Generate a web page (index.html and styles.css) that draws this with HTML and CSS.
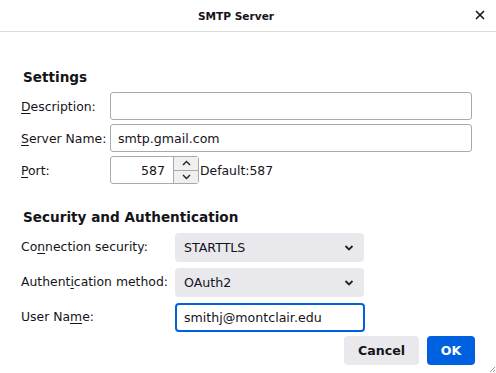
FILE: index.html
```html
<!DOCTYPE html>
<html lang="en">
<head>
    <meta charset="UTF-8">
    <title>SMTP Server</title>
    <link rel="stylesheet" href="styles.css">
</head>
<body>
    <div class="dialog">
        <div class="titlebar">
            <span class="title">SMTP Server</span>
            <svg class="close" width="10" height="10" viewBox="0 0 10 10">
                <path d="M1 1 L9 9 M9 1 L1 9" stroke="#15141a" stroke-width="1.6"/>
            </svg>
        </div>

        <div class="content">
            <h2 class="heading">Settings</h2>
            <div class="row settings-row">
                <label class="label short"><u>D</u>escription:</label>
                <input type="text" class="field wide">
            </div>
            <div class="row settings-row">
                <label class="label short"><u>S</u>erver Name:</label>
                <input type="text" class="field wide" value="smtp.gmail.com">
            </div>
            <div class="row settings-row">
                <label class="label short"><u>P</u>ort:</label>
                <div class="port">
                    <span class="port-value">587</span>
                    <div class="spin">
                        <span class="spin-btn up"><svg width="9" height="6" viewBox="0 0 9 6"><path d="M1 5 L4.5 1.5 L8 5" fill="none" stroke="#222" stroke-width="1.4"/></svg></span>
                        <span class="spin-btn down"><svg width="9" height="6" viewBox="0 0 9 6"><path d="M1 1 L4.5 4.5 L8 1" fill="none" stroke="#222" stroke-width="1.4"/></svg></span>
                    </div>
                </div>
                <span class="default">Default:587</span>
            </div>

            <h2 class="heading second">Security and Authentication</h2>
            <div class="row sec-row">
                <label class="label long">Co<u>n</u>nection security:</label>
                <div class="select">STARTTLS<svg class="chev" width="10" height="6" viewBox="0 0 10 6"><path d="M1.5 1 L5 4.5 L8.5 1" fill="none" stroke="#222" stroke-width="1.8"/></svg></div>
            </div>
            <div class="row sec-row">
                <label class="label long">Authent<u>i</u>cation method:</label>
                <div class="select">OAuth2<svg class="chev" width="10" height="6" viewBox="0 0 10 6"><path d="M1.5 1 L5 4.5 L8.5 1" fill="none" stroke="#222" stroke-width="1.8"/></svg></div>
            </div>
            <div class="row sec-row">
                <label class="label long">User Na<u>m</u>e:</label>
                <input type="text" class="field focused" value="smithj@montclair.edu">
            </div>

            <div class="buttons">
                <button class="btn cancel">Cancel</button>
                <button class="btn ok">OK</button>
            </div>
        </div>

        <svg class="grip" width="8" height="8" viewBox="0 0 8 8">
            <path d="M7 2 L2 7 M7 5 L5 7" stroke="#999" stroke-width="1"/>
        </svg>
    </div>
</body>
</html>
```

FILE: styles.css
```css
body {
    margin: 0;
    background-color: #ffffff;
    font-family: "DejaVu Sans", sans-serif;
    font-size: 12.4px;
    color: #15141a;
}
.dialog {
    position: relative;
    width: 496px;
    height: 373px;
    overflow: hidden;
}
.titlebar {
    box-sizing: border-box;
    height: 32px;
    padding-right: 24px;
    border-bottom: 1px solid #dcdcdc;
    display: flex;
    align-items: center;
    justify-content: center;
    position: relative;
}
.title {
    font-weight: bold;
    font-size: 10.6px;
}
.close {
    position: absolute;
    right: 11px;
    top: 10px;
}
.content {
    padding: 0 21px 0 21px;
}
.heading {
    font-size: 13.6px;
    font-weight: bold;
    margin: 37px 0 6px 2px;
    height: 17px;
    line-height: 17px;
}
.heading.second {
    margin-top: 25px;
    margin-bottom: 7px;
}
.row {
    display: flex;
    align-items: center;
}
.settings-row {
    height: 28px;
    margin-bottom: 4px;
}
.sec-row {
    height: 29px;
    margin-bottom: 6px;
}
.label {
    flex: none;
    white-space: nowrap;
}
.label.short {
    width: 89px;
}
.label.long {
    width: 154px;
    margin-top: -3px;
}
.label u {
    text-decoration-thickness: 1px;
    text-underline-offset: 2px;
}
.field {
    box-sizing: border-box;
    height: 28px;
    border: 1px solid #a8a8ae;
    border-radius: 3px;
    font-family: "DejaVu Sans", sans-serif;
    font-size: 12.6px;
    color: #15141a;
    padding: 0 7px;
    outline: none;
}
.field.wide {
    width: 362px;
}
.field.focused {
    width: 190px;
    height: 29px;
    border: 2px solid #0061e0;
    border-radius: 4px;
    padding: 0 7px;
}
.port {
    box-sizing: border-box;
    width: 89px;
    height: 28px;
    border: 1px solid #a8a8ae;
    border-radius: 3px;
    display: flex;
    align-items: center;
    justify-content: flex-end;
}
.port-value {
    margin-right: 8px;
    font-size: 12.6px;
}
.spin {
    width: 24px;
    height: 26px;
    display: flex;
    flex-direction: column;
    border-left: 1px solid #a8a8ae;
}
.spin-btn {
    flex: 1;
    display: flex;
    align-items: center;
    justify-content: center;
    background-color: #f0f0f0;
}
.spin-btn.up {
    border-bottom: 1px solid #a8a8ae;
}
.default {
    margin-left: 1px;
}
.select {
    box-sizing: border-box;
    width: 189px;
    height: 29px;
    background-color: #e9e9ed;
    border-radius: 4px;
    display: flex;
    align-items: center;
    justify-content: space-between;
    padding: 0 10px 0 9px;
    font-size: 12.6px;
}
.buttons {
    display: flex;
    justify-content: flex-end;
    gap: 8px;
    margin-top: -2px;
}
.btn {
    height: 29px;
    border: none;
    border-radius: 4px;
    font-family: "DejaVu Sans", sans-serif;
    font-size: 12.6px;
    font-weight: bold;
    cursor: pointer;
}
.btn.cancel {
    width: 75px;
    background-color: #e9e9ed;
    color: #15141a;
}
.btn.ok {
    width: 48px;
    background-color: #0061e0;
    color: #ffffff;
}
.grip {
    position: absolute;
    right: 0;
    bottom: 0;
}
```
